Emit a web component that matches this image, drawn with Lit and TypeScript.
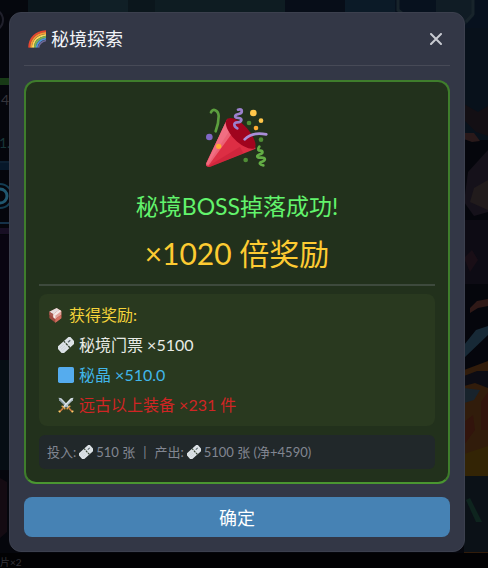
import { LitElement, html, svg, css } from "lit";
import { customElement } from "lit/decorators.js";

const ticket = svg`
  <g transform="rotate(-42 24 24)">
    <rect x="-2" y="11" width="52" height="27" rx="2" fill="#dce2e6"/>
    <path d="M4 18h16M4 24h16M4 30h16" stroke="#c3cbd1" stroke-width="2"/>
    <path d="M27 11v6M27 20v8M27 31v7" stroke="#34432f" stroke-width="4"/>
    <path d="M34 22h9" stroke="#5b686d" stroke-width="4"/>
  </g>`;

const iconShapes = {
  rainbow: svg`
    <g fill="none" stroke-width="5">
      <path d="M3 47C4 21 21 5 48 3" stroke="#e8472f"/>
      <path d="M8 47C9 24 24 10 48 8" stroke="#f79a35"/>
      <path d="M13 47C14 28 27 16 48 13" stroke="#fbd75b"/>
      <path d="M18 47C19 32 30 21 48 18" stroke="#77b255"/>
      <path d="M23 47C24 36 33 26 48 23" stroke="#4f97dc"/>
      <path d="M28 47C29 39 36 31 48 28" stroke="#6f6a9c" stroke-width="4"/>
    </g>`,
  chest: svg`
    <path d="M4 14 26 3l14 9v22L22 47 4 33z" fill="#9c4a3f"/>
    <path d="M4 14 26 3l8 5-18 14z" fill="#e6dedd"/>
    <path d="M4 14l12 8v9L4 23z" fill="#a85a50"/>
    <path d="M16 22 34 8l6 4v11L22 36l-6-5z" fill="#e3a299"/>
    <path d="M16 22 34 8l6 4-18 14z" fill="#f4e9e6"/>
    <path d="M22 36l18-13v11L22 47z" fill="#d26f61"/>
    <path d="M16 22l6 4v10l-6-5z" fill="#f3efee"/>`,
  ticket,
  crystal: svg`<rect x="0" y="0" width="48" height="48" rx="5" fill="#55acee"/>`,
  swords: svg`
    <path d="M2 2l8 2 24 25-5 5L4 10z" fill="#ccd6dd"/>
    <path d="M2 2l30 30-3 2L4 10z" fill="#8899a6"/>
    <path d="M46 2l-8 2-24 25 5 5 25-24z" fill="#e1e8ed"/>
    <path d="M46 2 16 32l3 2 25-24z" fill="#aab8c2"/>
    <path d="M26 37 37 26M11 26l11 11" stroke="#e2a14a" stroke-width="4"/>
    <path d="M33 34l11 11M15 34 4 45" stroke="#c87941" stroke-width="5"/>
    <path d="M41 46l5-5M2 41l5 5" stroke="#ffcc6a" stroke-width="4"/>`,
};

const icon = (name: keyof typeof iconShapes, size: "sm" | "md" | "lg") =>
  html`<svg class="icon ${size}" viewBox="0 0 48 48" aria-hidden="true">${iconShapes[name]}</svg>`;

const popper = html`
  <svg class="popper" viewBox="45 36 192 192" aria-hidden="true">
    <path d="M112 74 49 207q-3 14 10 12l138-55q-18-62-85-90z" fill="#dd2e44"/>
    <path d="M112 74 49 207q-2 6 1 9l72-112z" fill="#ea596e"/>
    <path d="M106 86 50 208l4 9 70-96z" fill="#f4788a" opacity=".7"/>
    <path d="M54 217 150 158l10 20-101 41z" fill="#be1931" opacity=".4"/>
    <path d="M112 75c13-10 42 7 61 30s29 49 21 57-38-3-60-26-34-52-22-61z" fill="#a0041e"/>
    <g fill="none" stroke-linecap="round">
      <path d="M63 55c4-13 22-8 23 11 0 18-3 31-9 46" stroke="#5c9f3e" stroke-width="8"/>
      <path d="M144 47c16-5 14 11 2 13s-16 11-1 12 10 13-3 13-11 12 0 18" stroke="#9b80cd" stroke-width="8"/>
      <path d="M164 136c14-15 39-20 65-15" stroke="#aa8dd8" stroke-width="8"/>
      <path d="M208 158c-7 9-3 12 4 12s8 8-2 11-13 11 3 10 14 9 3 12-7 10 4 11" stroke="#63ad45" stroke-width="8"/>
    </g>
    <g fill="#ffac33">
      <circle cx="190" cy="57" r="10" fill="#ffc64a"/>
      <circle cx="213" cy="80" r="7" fill="#ffc64a"/>
      <circle cx="198" cy="102" r="7"/>
      <circle cx="86" cy="157" r="8"/>
    </g>
    <circle cx="58" cy="129" r="10" fill="#8067c5"/>
    <g fill="#4f8c36">
      <circle cx="177" cy="87" r="7"/>
      <circle cx="213" cy="137" r="7"/>
      <circle cx="167" cy="198" r="7"/>
    </g>
  </svg>`;

const scene = html`
  <svg class="scene" viewBox="0 0 488 568" preserveAspectRatio="none" aria-hidden="true">
    <rect width="488" height="568" fill="#05060c"/>
    <rect x="28" width="127" height="14" fill="#0b161c"/>
    <rect x="90" width="38" height="14" fill="#101f26"/>
    <rect x="155" width="130" height="14" fill="#0e1c22"/>
    <rect x="285" width="75" height="14" fill="#070d18"/>
    <rect x="345" width="50" height="14" fill="#0b1a27"/>
    <path d="M395 0h93v80h-93z" fill="#07111e"/>
    <path d="M436 0h38v16l-12 12-26-12z" fill="#101c25"/>
    <path d="M398 0v10l5 4M473 0v14l-7 8" stroke="#18242b" stroke-width="3" fill="none"/>
    <path d="M464 28h24v112h-24z" fill="#08111b"/>
    <path d="M464 104l14 8 10-6v30l-12-4-12-12z" fill="#130f14"/>
    <path d="M464 133h10l6 8-8 1-8-3z" fill="#29191a"/>
    <path d="M488 150l-20 22-4 30 10 14 14-4z" fill="#15111a"/>
    <path d="M488 180l-14 8-4 14 18 8z" fill="#211b1c"/>
    <path d="M464 220h24v64h-24z" fill="#0d0b14"/>
    <path d="M464 258l8-8 6 10-8 12z" fill="#190e16"/>
    <path d="M470 308l7-7 11-2v7l-10 2-8 5z" fill="#2f1917"/>
    <path d="M464 345l12-15 12-4v9l-24 23z" fill="#172936"/>
    <path d="M464 370l24-9v212h-24z" fill="#311c0b"/>
    <path d="M464 376l13-5h11v17l-13-5-11 3z" fill="#0c0c14"/>
    <path d="M464 388l16 2-6 10-10 3z" fill="#18232c"/>
    <path d="M488 392l-7 10v28h7zM464 422l9-7 2 15-11 15z" fill="#32140c"/>
    <path d="M464 454l24-8v30h-24z" fill="#332405"/>
    <path d="M464 476h24v76h-24z" fill="#0b1117"/>
    <path d="M466 500l10 22h6l-12-24z" fill="#0e241e"/>
    <path d="M0 0h28v14H0z" fill="#05070d"/>
    <circle cx="-8" cy="20" r="11" fill="none" stroke="#20202b" stroke-width="2"/>
    <rect y="78" width="12" height="7" fill="#183a16"/>
    <rect y="163" width="12" height="7" fill="#07182a"/>
    <path d="M0 162h12" stroke="#163b59"/>
    <circle cx="0" cy="196" r="7" fill="none" stroke="#20576f" stroke-width="3"/>
    <circle cx="0" cy="196" r="12" fill="none" stroke="#143d53" stroke-width="2"/>
    <path d="M0 223h12" stroke="#153148" stroke-width="2"/>
    <rect y="228" width="12" height="6" fill="#180f24"/>
    <path d="M0 235h12v125H0z" fill="#090511"/>
    <path d="M0 360h12v110H0z" fill="#060d14"/>
    <path d="M0 478l7 4v50l-7 6z" fill="#140b12"/>
    <rect y="553" width="488" height="15" fill="#020204"/>
    <text x="1" y="105" class="faint">4</text>
    <text x="-1" y="148" class="faint teal">1.6</text>
    <text x="0" y="566" class="faint tiny">片×2</text>
  </svg>`;

@customElement("app-root")
export class AppRoot extends LitElement {
  static styles = css`
    :host {
      display: block;
      position: relative;
      box-sizing: border-box;
      min-height: 100vh;
      overflow: hidden;
      padding: 12px 23px 16px 9px;
      background: #05060c;
      color: #f1f3f8;
      font-family: Lato, "Noto Sans CJK SC", sans-serif;
    }
    * { box-sizing: border-box; margin: 0; }
    .scene { position: absolute; inset: 0; width: 100%; height: 100%; }
    .faint { font-size: 14px; fill: #34343b; }
    .teal { fill: #183638; }
    .tiny { font-size: 10px; }
    .dialog {
      position: relative;
      display: flex;
      flex-direction: column;
      padding: 0 14px 14px;
      border: 1px solid #3c404e;
      border-radius: 12px;
      background: #333746;
    }
    header {
      display: flex;
      align-items: center;
      justify-content: space-between;
      height: 53px;
      padding-bottom: 1px;
      border-bottom: 1px solid #474a57;
    }
    h2, h3, h4, .multiplier { font-weight: 400; }
    h2 {
      display: flex;
      align-items: center;
      gap: 5px;
      padding-left: 4px;
      font-size: 18px;
      line-height: 24px;
    }
    .close {
      display: grid;
      place-items: center;
      width: 28px;
      height: 28px;
      padding: 0;
      border: 0;
      background: none;
      color: #c8cad1;
      cursor: pointer;
    }
    .close svg { width: 12px; height: 12px; }
    .icon { flex: none; }
    .sm { width: 14px; height: 14px; }
    .md { width: 16px; height: 16px; }
    .lg { width: 18px; height: 18px; }
    .card {
      display: flex;
      flex-direction: column;
      margin-top: 14px;
      padding: 24px 13px 13px;
      border: 2px solid #3f7d2c;
      border-bottom-color: #4a9631;
      border-radius: 12px;
      background: #22311c;
    }
    .hero {
      display: flex;
      flex-direction: column;
      align-items: center;
      padding-bottom: 11px;
      border-bottom: 2px solid #3e4a3d;
    }
    .popper { width: 64px; height: 64px; }
    h3 { margin-top: 20px; font-size: 23px; line-height: 32px; color: #62f46c; }
    .multiplier { margin-top: 11px; font-size: 30px; line-height: 40px; color: #fdcb32; }
    .rewards {
      margin-top: 8px;
      padding: 6px 9px;
      border-radius: 8px;
      background: #29391f;
    }
    h4, li {
      display: flex;
      align-items: center;
      gap: 5px;
      font-size: 16px;
      line-height: 30px;
    }
    h4 { color: #f5d33a; }
    ul { padding: 0 0 0 10px; list-style: none; }
    .white { color: #e8ebe6; }
    .blue { color: #41b6e9; }
    .red { color: #d02524; }
    .summary {
      display: flex;
      align-items: center;
      gap: 8px;
      margin-top: 9px;
      padding: 0 8px;
      border-radius: 6px;
      background: #21282a;
      color: #818691;
      font-size: 13px;
      line-height: 34px;
    }
    .flow { display: flex; align-items: center; gap: 3px; }
    .confirm {
      height: 40px;
      margin-top: 13px;
      border: 0;
      border-radius: 8px;
      background: #4682b4;
      color: #fff;
      font: inherit;
      font-size: 18px;
      cursor: pointer;
    }
  `;

  render() {
    return html`
      ${scene}
      <section class="dialog" role="dialog" aria-labelledby="title">
        <header>
          <h2 id="title">${icon("rainbow", "lg")}秘境探索</h2>
          <button class="close" aria-label="关闭">
            <svg viewBox="0 0 12 12" fill="none" stroke="currentColor" stroke-width="2" stroke-linecap="round">
              <path d="M1 1l10 10M11 1 1 11"/>
            </svg>
          </button>
        </header>
        <div class="card">
          <div class="hero">
            ${popper}
            <h3>秘境BOSS掉落成功!</h3>
            <p class="multiplier">×1020 倍奖励</p>
          </div>
          <div class="rewards">
            <h4>${icon("chest", "md")}获得奖励:</h4>
            <ul>
              <li class="white">${icon("ticket", "md")}秘境门票 ×5100</li>
              <li class="blue">${icon("crystal", "md")}秘晶 ×510.0</li>
              <li class="red">${icon("swords", "md")}远古以上装备 ×231 件</li>
            </ul>
          </div>
          <p class="summary">
            <span class="flow">投入: ${icon("ticket", "sm")} 510 张</span>
            <span>|</span>
            <span class="flow">产出: ${icon("ticket", "sm")} 5100 张 (净+4590)</span>
          </p>
        </div>
        <button class="confirm">确定</button>
      </section>
    `;
  }
}
